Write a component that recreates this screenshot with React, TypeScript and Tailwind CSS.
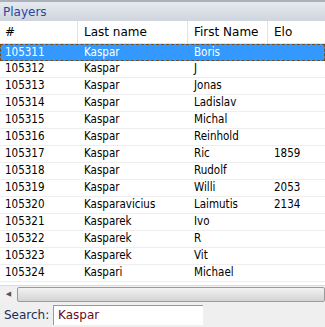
import React from "react";

const rows: [string, string, string, string][] = [
  ["105311", "Kaspar", "Boris", ""],
  ["105312", "Kaspar", "J", ""],
  ["105313", "Kaspar", "Jonas", ""],
  ["105314", "Kaspar", "Ladislav", ""],
  ["105315", "Kaspar", "Michal", ""],
  ["105316", "Kaspar", "Reinhold", ""],
  ["105317", "Kaspar", "Ric", "1859"],
  ["105318", "Kaspar", "Rudolf", ""],
  ["105319", "Kaspar", "Willi", "2053"],
  ["105320", "Kasparavicius", "Laimutis", "2134"],
  ["105321", "Kasparek", "Ivo", ""],
  ["105322", "Kasparek", "R", ""],
  ["105323", "Kasparek", "Vit", ""],
  ["105324", "Kaspari", "Michael", ""],
];

export default function App() {
  return (
    <div
      className="w-[325px] h-[327px] bg-[#f0f0f0] flex flex-col overflow-hidden"
      style={{ fontFamily: '"DejaVu Sans", "Liberation Sans", sans-serif' }}
    >
      <div className="h-[21px] shrink-0 border-t-2 border-[#a9b1bc] bg-gradient-to-b from-[#e6eaf0] to-[#cfd5dd] flex items-center pl-[3px] text-[12px] text-[#2a47a0]">
        Players
      </div>
      <div className="flex-1 bg-white flex flex-col">
        <div className="h-[23px] shrink-0 flex text-[12px] text-black border-b border-[#e3e3e3]">
          <div className="w-[78px] pl-[5px] flex items-center border-r border-[#e3e3e3]">#</div>
          <div className="w-[110px] pl-[6px] flex items-center border-r border-[#e3e3e3]">Last name</div>
          <div className="w-[80px] pl-[6px] flex items-center border-r border-[#e3e3e3]">First Name</div>
          <div className="flex-1 pl-[6px] flex items-center">Elo</div>
        </div>
        {rows.map((r, i) => (
          <div
            key={r[0]}
            className={
              "h-[17px] shrink-0 flex items-center text-[11.5px] " +
              (i === 0
                ? "bg-[#3399ff] text-white border border-dashed border-[#7a4a10]"
                : "text-black border-b border-[#eeeeee]")
            }
            style={{ fontFamily: '"DejaVu Sans Condensed", "DejaVu Sans", sans-serif', fontWeight: 500 }}
          >
            <div className={i === 0 ? "w-[77px] pl-[4px]" : "w-[78px] pl-[5px]"}>{r[0]}</div>
            <div className="w-[110px] pl-[6px]">{r[1]}</div>
            <div className="w-[80px] pl-[6px]">{r[2]}</div>
            <div className="flex-1 pl-[6px]">{r[3]}</div>
          </div>
        ))}
      </div>
      <div className="h-[17px] shrink-0 flex items-center bg-[#f0f0f0] border-t border-[#dcdcdc]">
        <div className="w-[17px] flex items-center justify-center text-[#555] text-[7px]">◀</div>
        <div className="flex-1 h-[15px] border border-[#9a9a9a] rounded-[2px] bg-gradient-to-b from-[#f2f2f2] to-[#d4d4d4]"></div>
      </div>
      <div className="h-[25px] shrink-0 flex items-center bg-[#efefef] text-[12px]" style={{ fontFamily: '"DejaVu Sans", sans-serif' }}>
        <div className="pl-[4px] w-[53px] text-[#1a2e5a]">Search:</div>
        <div className="w-[150px] h-[20px] bg-white border-t border-l border-[#9a9a9a] flex items-center pl-[4px] text-[#6b0a1e]">
          Kaspar
        </div>
      </div>
    </div>
  );
}
